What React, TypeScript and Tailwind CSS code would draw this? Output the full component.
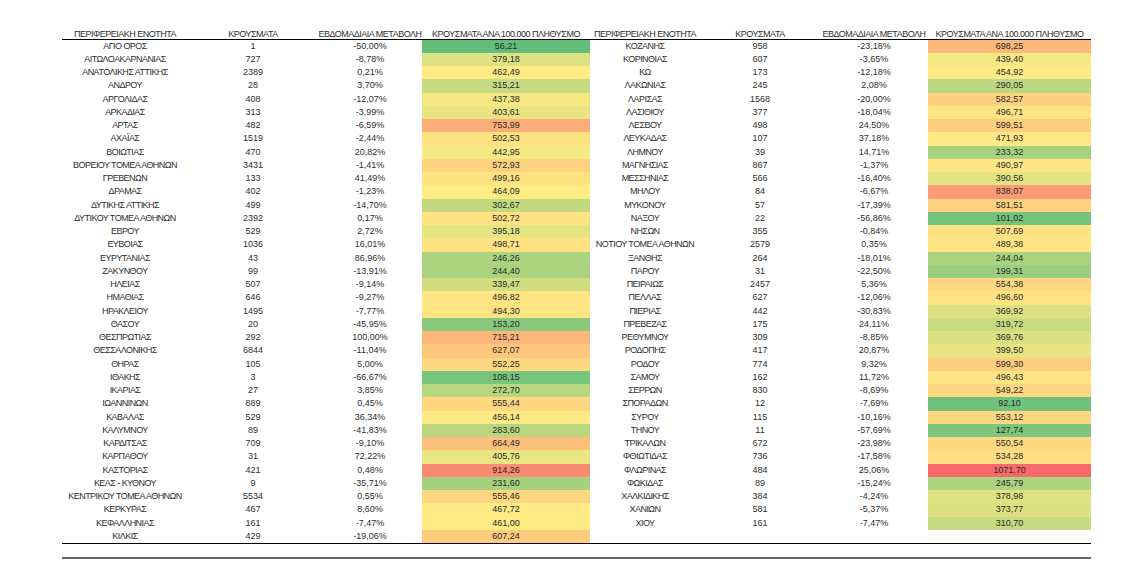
type Row = [string, number, string, number]

const left: Row[] = [
  ["ΑΓΙΟ ΟΡΟΣ", 1, "-50,00%", 56.21],
  ["ΑΙΤΩΛΟΑΚΑΡΝΑΝΙΑΣ", 727, "-8,78%", 379.18],
  ["ΑΝΑΤΟΛΙΚΗΣ ΑΤΤΙΚΗΣ", 2389, "0,21%", 462.49],
  ["ΑΝΔΡΟΥ", 28, "3,70%", 315.21],
  ["ΑΡΓΟΛΙΔΑΣ", 408, "-12,07%", 437.38],
  ["ΑΡΚΑΔΙΑΣ", 313, "-3,99%", 403.61],
  ["ΑΡΤΑΣ", 482, "-6,59%", 753.99],
  ["ΑΧΑΪΑΣ", 1519, "-2,44%", 502.53],
  ["ΒΟΙΩΤΙΑΣ", 470, "20,82%", 442.95],
  ["ΒΟΡΕΙΟΥ ΤΟΜΕΑ ΑΘΗΝΩΝ", 3431, "-1,41%", 572.93],
  ["ΓΡΕΒΕΝΩΝ", 133, "41,49%", 499.16],
  ["ΔΡΑΜΑΣ", 402, "-1,23%", 464.09],
  ["ΔΥΤΙΚΗΣ ΑΤΤΙΚΗΣ", 499, "-14,70%", 302.67],
  ["ΔΥΤΙΚΟΥ ΤΟΜΕΑ ΑΘΗΝΩΝ", 2392, "0,17%", 502.72],
  ["ΕΒΡΟΥ", 529, "2,72%", 395.18],
  ["ΕΥΒΟΙΑΣ", 1036, "16,01%", 498.71],
  ["ΕΥΡΥΤΑΝΙΑΣ", 43, "86,96%", 246.26],
  ["ΖΑΚΥΝΘΟΥ", 99, "-13,91%", 244.4],
  ["ΗΛΕΙΑΣ", 507, "-9,14%", 339.47],
  ["ΗΜΑΘΙΑΣ", 646, "-9,27%", 496.82],
  ["ΗΡΑΚΛΕΙΟΥ", 1495, "-7,77%", 494.3],
  ["ΘΑΣΟΥ", 20, "-45,95%", 153.2],
  ["ΘΕΣΠΡΩΤΙΑΣ", 292, "100,00%", 715.21],
  ["ΘΕΣΣΑΛΟΝΙΚΗΣ", 6844, "-11,04%", 627.07],
  ["ΘΗΡΑΣ", 105, "5,00%", 552.25],
  ["ΙΘΑΚΗΣ", 3, "-66,67%", 108.15],
  ["ΙΚΑΡΙΑΣ", 27, "3,85%", 272.7],
  ["ΙΩΑΝΝΙΝΩΝ", 889, "0,45%", 555.44],
  ["ΚΑΒΑΛΑΣ", 529, "36,34%", 456.14],
  ["ΚΑΛΥΜΝΟΥ", 89, "-41,83%", 283.6],
  ["ΚΑΡΔΙΤΣΑΣ", 709, "-9,10%", 664.49],
  ["ΚΑΡΠΑΘΟΥ", 31, "72,22%", 405.76],
  ["ΚΑΣΤΟΡΙΑΣ", 421, "0,48%", 914.26],
  ["ΚΕΑΣ - ΚΥΘΝΟΥ", 9, "-35,71%", 231.6],
  ["ΚΕΝΤΡΙΚΟΥ ΤΟΜΕΑ ΑΘΗΝΩΝ", 5534, "0,55%", 555.46],
  ["ΚΕΡΚΥΡΑΣ", 467, "8,60%", 467.72],
  ["ΚΕΦΑΛΛΗΝΙΑΣ", 161, "-7,47%", 461.0],
  ["ΚΙΛΚΙΣ", 429, "-19,06%", 607.24],
]

const right: Row[] = [
  ["ΚΟΖΑΝΗΣ", 958, "-23,18%", 698.25],
  ["ΚΟΡΙΝΘΙΑΣ", 607, "-3,65%", 439.4],
  ["ΚΩ", 173, "-12,18%", 454.92],
  ["ΛΑΚΩΝΙΑΣ", 245, "2,08%", 290.05],
  ["ΛΑΡΙΣΑΣ", 1568, "-20,00%", 582.57],
  ["ΛΑΣΙΘΙΟΥ", 377, "-18,04%", 496.71],
  ["ΛΕΣΒΟΥ", 498, "24,50%", 599.51],
  ["ΛΕΥΚΑΔΑΣ", 107, "37,18%", 471.93],
  ["ΛΗΜΝΟΥ", 39, "14,71%", 233.32],
  ["ΜΑΓΝΗΣΙΑΣ", 867, "-1,37%", 490.97],
  ["ΜΕΣΣΗΝΙΑΣ", 566, "-16,40%", 390.56],
  ["ΜΗΛΟΥ", 84, "-6,67%", 838.07],
  ["ΜΥΚΟΝΟΥ", 57, "-17,39%", 581.51],
  ["ΝΑΞΟΥ", 22, "-56,86%", 101.02],
  ["ΝΗΣΩΝ", 355, "-0,84%", 507.69],
  ["ΝΟΤΙΟΥ ΤΟΜΕΑ ΑΘΗΝΩΝ", 2579, "0,35%", 489.38],
  ["ΞΑΝΘΗΣ", 264, "-18,01%", 244.04],
  ["ΠΑΡΟΥ", 31, "-22,50%", 199.31],
  ["ΠΕΙΡΑΙΩΣ", 2457, "5,36%", 554.38],
  ["ΠΕΛΛΑΣ", 627, "-12,06%", 496.6],
  ["ΠΙΕΡΙΑΣ", 442, "-30,83%", 369.92],
  ["ΠΡΕΒΕΖΑΣ", 175, "24,11%", 319.72],
  ["ΡΕΘΥΜΝΟΥ", 309, "-8,85%", 369.76],
  ["ΡΟΔΟΠΗΣ", 417, "20,87%", 399.5],
  ["ΡΟΔΟΥ", 774, "9,32%", 599.3],
  ["ΣΑΜΟΥ", 162, "11,72%", 496.43],
  ["ΣΕΡΡΩΝ", 830, "-8,69%", 549.22],
  ["ΣΠΟΡΑΔΩΝ", 12, "-7,69%", 92.1],
  ["ΣΥΡΟΥ", 115, "-10,16%", 553.12],
  ["ΤΗΝΟΥ", 11, "-57,69%", 127.74],
  ["ΤΡΙΚΑΛΩΝ", 672, "-23,98%", 550.54],
  ["ΦΘΙΩΤΙΔΑΣ", 736, "-17,58%", 534.28],
  ["ΦΛΩΡΙΝΑΣ", 484, "25,06%", 1071.7],
  ["ΦΩΚΙΔΑΣ", 89, "-15,24%", 245.79],
  ["ΧΑΛΚΙΔΙΚΗΣ", 384, "-4,24%", 378.98],
  ["ΧΑΝΙΩΝ", 581, "-5,37%", 373.77],
  ["ΧΙΟΥ", 161, "-7,47%", 310.7],
]

// three-colour scale, min green -> median yellow -> max red
const all = [...left, ...right].map(r => r[3]).sort((a, b) => a - b)
const lo = all[0]
const hi = all[all.length - 1]
const mid = (all[Math.floor((all.length - 1) / 2)] + all[Math.ceil((all.length - 1) / 2)]) / 2
const green = [99, 190, 123]
const yellow = [255, 235, 132]
const red = [248, 105, 107]

function mix(a: number[], b: number[], t: number) {
  return `rgb(${a.map((v, i) => Math.round(v + (b[i] - v) * t)).join(",")})`
}

function scale(v: number) {
  if (v <= mid) return mix(green, yellow, (v - lo) / (mid - lo))
  return mix(yellow, red, (v - mid) / (hi - mid))
}

const fmt = (v: number) => v.toFixed(2).replace(".", ",")

const headers = ["ΠΕΡΙΦΕΡΕΙΑΚΗ ΕΝΟΤΗΤΑ", "ΚΡΟΥΣΜΑΤΑ", "ΕΒΔΟΜΑΔΙΑΙΑ ΜΕΤΑΒΟΛΗ", "ΚΡΟΥΣΜΑΤΑ ΑΝΑ 100.000 ΠΛΗΘΥΣΜΟ"]

function Cells({ row }: { row?: Row }) {
  if (!row) return (<><div /><div /><div /><div /></>)
  return (
    <>
      <div className="text-center whitespace-nowrap tracking-[-0.55px]">{row[0]}</div>
      <div className="text-center">{row[1]}</div>
      <div className="text-center">{row[2]}</div>
      <div className="text-center text-[#2a2a2a]" style={{ backgroundColor: scale(row[3]) }}>{fmt(row[3])}</div>
    </>
  )
}

export default function App() {
  const rows = Array.from({ length: left.length }, (_, i) => i)
  return (
    <div className="w-[1146px] h-[572px] bg-white pt-[29px] pl-[62px] text-[#2e2e2e] text-[9px]" style={{ fontFamily: '"Liberation Sans", Arial, sans-serif' }}>
      <div className="w-[1029px]">
        <div className="grid grid-cols-[126px_130px_104px_168px_110px_120px_108px_163px] h-[10.5px] leading-[10px] border-b border-black">
          {[...headers, ...headers].map((h, i) => (
            <div key={i} className="text-center whitespace-nowrap tracking-[-0.5px]">{h}</div>
          ))}
        </div>
        <div className="grid grid-cols-[126px_130px_104px_168px_110px_120px_108px_163px] auto-rows-[13.25px] leading-[13.25px] border-b border-black">
          {rows.map(i => (
            <div key={i} className="contents">
              <Cells row={left[i]} />
              <Cells row={right[i]} />
            </div>
          ))}
        </div>
        <div className="mt-[13px] h-[2px] bg-[#666]" />
      </div>
    </div>
  )
}
